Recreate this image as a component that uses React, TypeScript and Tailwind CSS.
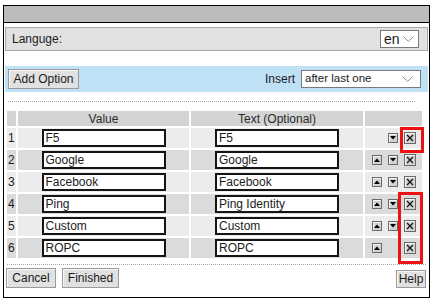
import React from 'react'

type Row = { n: number; value: string; text: string; up: boolean; down: boolean }

const rows: Row[] = [
  { n: 1, value: 'F5', text: 'F5', up: false, down: true },
  { n: 2, value: 'Google', text: 'Google', up: true, down: true },
  { n: 3, value: 'Facebook', text: 'Facebook', up: true, down: true },
  { n: 4, value: 'Ping', text: 'Ping Identity', up: true, down: true },
  { n: 5, value: 'Custom', text: 'Custom', up: true, down: true },
  { n: 6, value: 'ROPC', text: 'ROPC', up: true, down: false },
]

function Chevron() {
  return (
    <svg width="11" height="6" viewBox="0 0 11 6" className="shrink-0">
      <polyline points="0.5,0.5 5.5,5.5 10.5,0.5" fill="none" stroke="#8a8a8a" strokeWidth="1" />
    </svg>
  )
}

function Btn({ children, className = '' }: { children: React.ReactNode; className?: string }) {
  return (
    <div
      className={`flex items-center justify-center whitespace-nowrap border border-[#9a9a9a] bg-[#e1e1e1] text-[12px] text-[#1b1b1b] shadow-[inset_1px_1px_0_#f7f7f7] ${className}`}
    >
      {children}
    </div>
  )
}

function Arrow({ dir, show }: { dir: 'up' | 'down'; show: boolean }) {
  return (
    <div
      className={`flex h-[10px] w-[10px] items-center justify-center border border-[#6a6a6a] bg-[#d2d2d2] shadow-[inset_1px_1px_0_#f4f4f4] ${show ? '' : 'invisible'}`}
    >
      <svg width="6" height="4" viewBox="0 0 6 4">
        {dir === 'up' ? <polygon points="0,4 3,0.5 6,4" fill="#000" /> : <polygon points="0,0 6,0 3,3.5" fill="#000" />}
      </svg>
    </div>
  )
}

function Del() {
  return (
    <div className="flex h-[12px] w-[12px] items-center justify-center border border-[#6a6a6a] bg-[#d4d4d4] shadow-[inset_1px_1px_0_#f4f4f4]">
      <svg width="8" height="8" viewBox="0 0 8 8">
        <path d="M1 1 L7 7 M7 1 L1 7" stroke="#111" strokeWidth="1.3" />
      </svg>
    </div>
  )
}

export default function App() {
  return (
    <div className="relative h-[300px] w-[435px] overflow-hidden bg-white pl-[3px] pt-[5px] font-['Liberation_Sans',Arial,sans-serif] text-[11.5px] text-[#1b1b1b]">
      <div className="flex h-[293px] w-[427px] flex-col border border-black bg-white">
        {/* title bar */}
        <div className="h-[17px] border-b border-black bg-[#bcbcbc]" />

        {/* language */}
        <div className="ml-[1px] mt-[4px] flex h-[24px] w-[423px] items-center justify-between border border-[#a9a9a9] bg-[#e1e1e1] pl-[6px] pr-[8px]">
          <span className="text-[12px]">Languge:</span>
          <div className="flex h-[18px] w-[39px] items-center justify-between border border-[#7a7a7a] bg-white pl-[3px] pr-[4px]">
            <span className="text-[14px] leading-none">en</span>
            <Chevron />
          </div>
        </div>

        {/* toolbar */}
        <div className="ml-[1px] mt-[15px] flex h-[26px] w-[423px] items-center justify-between bg-[#bfe1f6] pl-[3px] pr-[7px]">
          <Btn className="h-[20px] w-[71px]">Add Option</Btn>
          <div className="flex items-center gap-[6px]">
            <span className="text-[12px]">Insert</span>
            <div className="flex h-[18px] w-[120px] items-center justify-between border border-[#7a7a7a] bg-white pl-[3px] pr-[7px]">
              <span>after last one</span>
              <Chevron />
            </div>
          </div>
        </div>

        <div className="ml-[4px] mt-[9px] w-[407px] border-t border-dotted border-[#a5a5a5]" />

        {/* table */}
        <div className="ml-[3px] mt-[9px] grid grid-cols-[9px_171px_172px_57px] gap-[2px]">
          <div className="h-[15px] bg-[#d4d4d4]" />
          <div className="flex h-[15px] items-center justify-center bg-[#d4d4d4] text-[12px] text-[#2a2a2a]">Value</div>
          <div className="flex h-[15px] items-center justify-center bg-[#d4d4d4] text-[12px] text-[#2a2a2a]">Text (Optional)</div>
          <div className="h-[15px] bg-[#d4d4d4]" />
          {rows.map((r) => {
            const bg = r.n % 2 === 1 ? 'bg-[#ececec]' : 'bg-[#dbdbdb]'
            return (
              <React.Fragment key={r.n}>
                <div className={`flex h-[20px] items-center pl-[1px] text-[12px] ${bg}`}>{r.n}</div>
                <div className={`flex h-[20px] items-center justify-center ${bg}`}>
                  <div className="flex h-[18px] w-[124px] items-center whitespace-nowrap border-2 border-[#151515] bg-white pl-[2px] text-[12px]">{r.value}</div>
                </div>
                <div className={`flex h-[20px] items-center justify-center ${bg}`}>
                  <div className="flex h-[18px] w-[124px] items-center whitespace-nowrap border-2 border-[#151515] bg-white pl-[2px] text-[12px]">{r.text}</div>
                </div>
                <div className={`flex h-[20px] items-center gap-[6px] pl-[7px] ${bg}`}>
                  <Arrow dir="up" show={r.up} />
                  <Arrow dir="down" show={r.down} />
                  <Del />
                </div>
              </React.Fragment>
            )
          })}
        </div>

        <div className="ml-[3px] mt-[6px] w-[419px] border-t border-dotted border-[#a5a5a5]" />

        {/* footer */}
        <div className="mt-[3px] flex items-start pl-[2px] pr-[3px]">
          <Btn className="h-[20px] w-[50px]">Cancel</Btn>
          <Btn className="ml-[6px] h-[20px] w-[57px]">Finished</Btn>
          <Btn className="ml-auto mt-[2px] h-[18px] w-[30px]">Help</Btn>
        </div>
      </div>

      {/* annotations */}
      <div className="absolute left-[400px] top-[127px] h-[26px] w-[24px] border-[3px] border-[#ee1111]" />
      <div className="absolute left-[398px] top-[192px] h-[72px] w-[25px] border-[3px] border-[#ee1111]" />
    </div>
  )
}
